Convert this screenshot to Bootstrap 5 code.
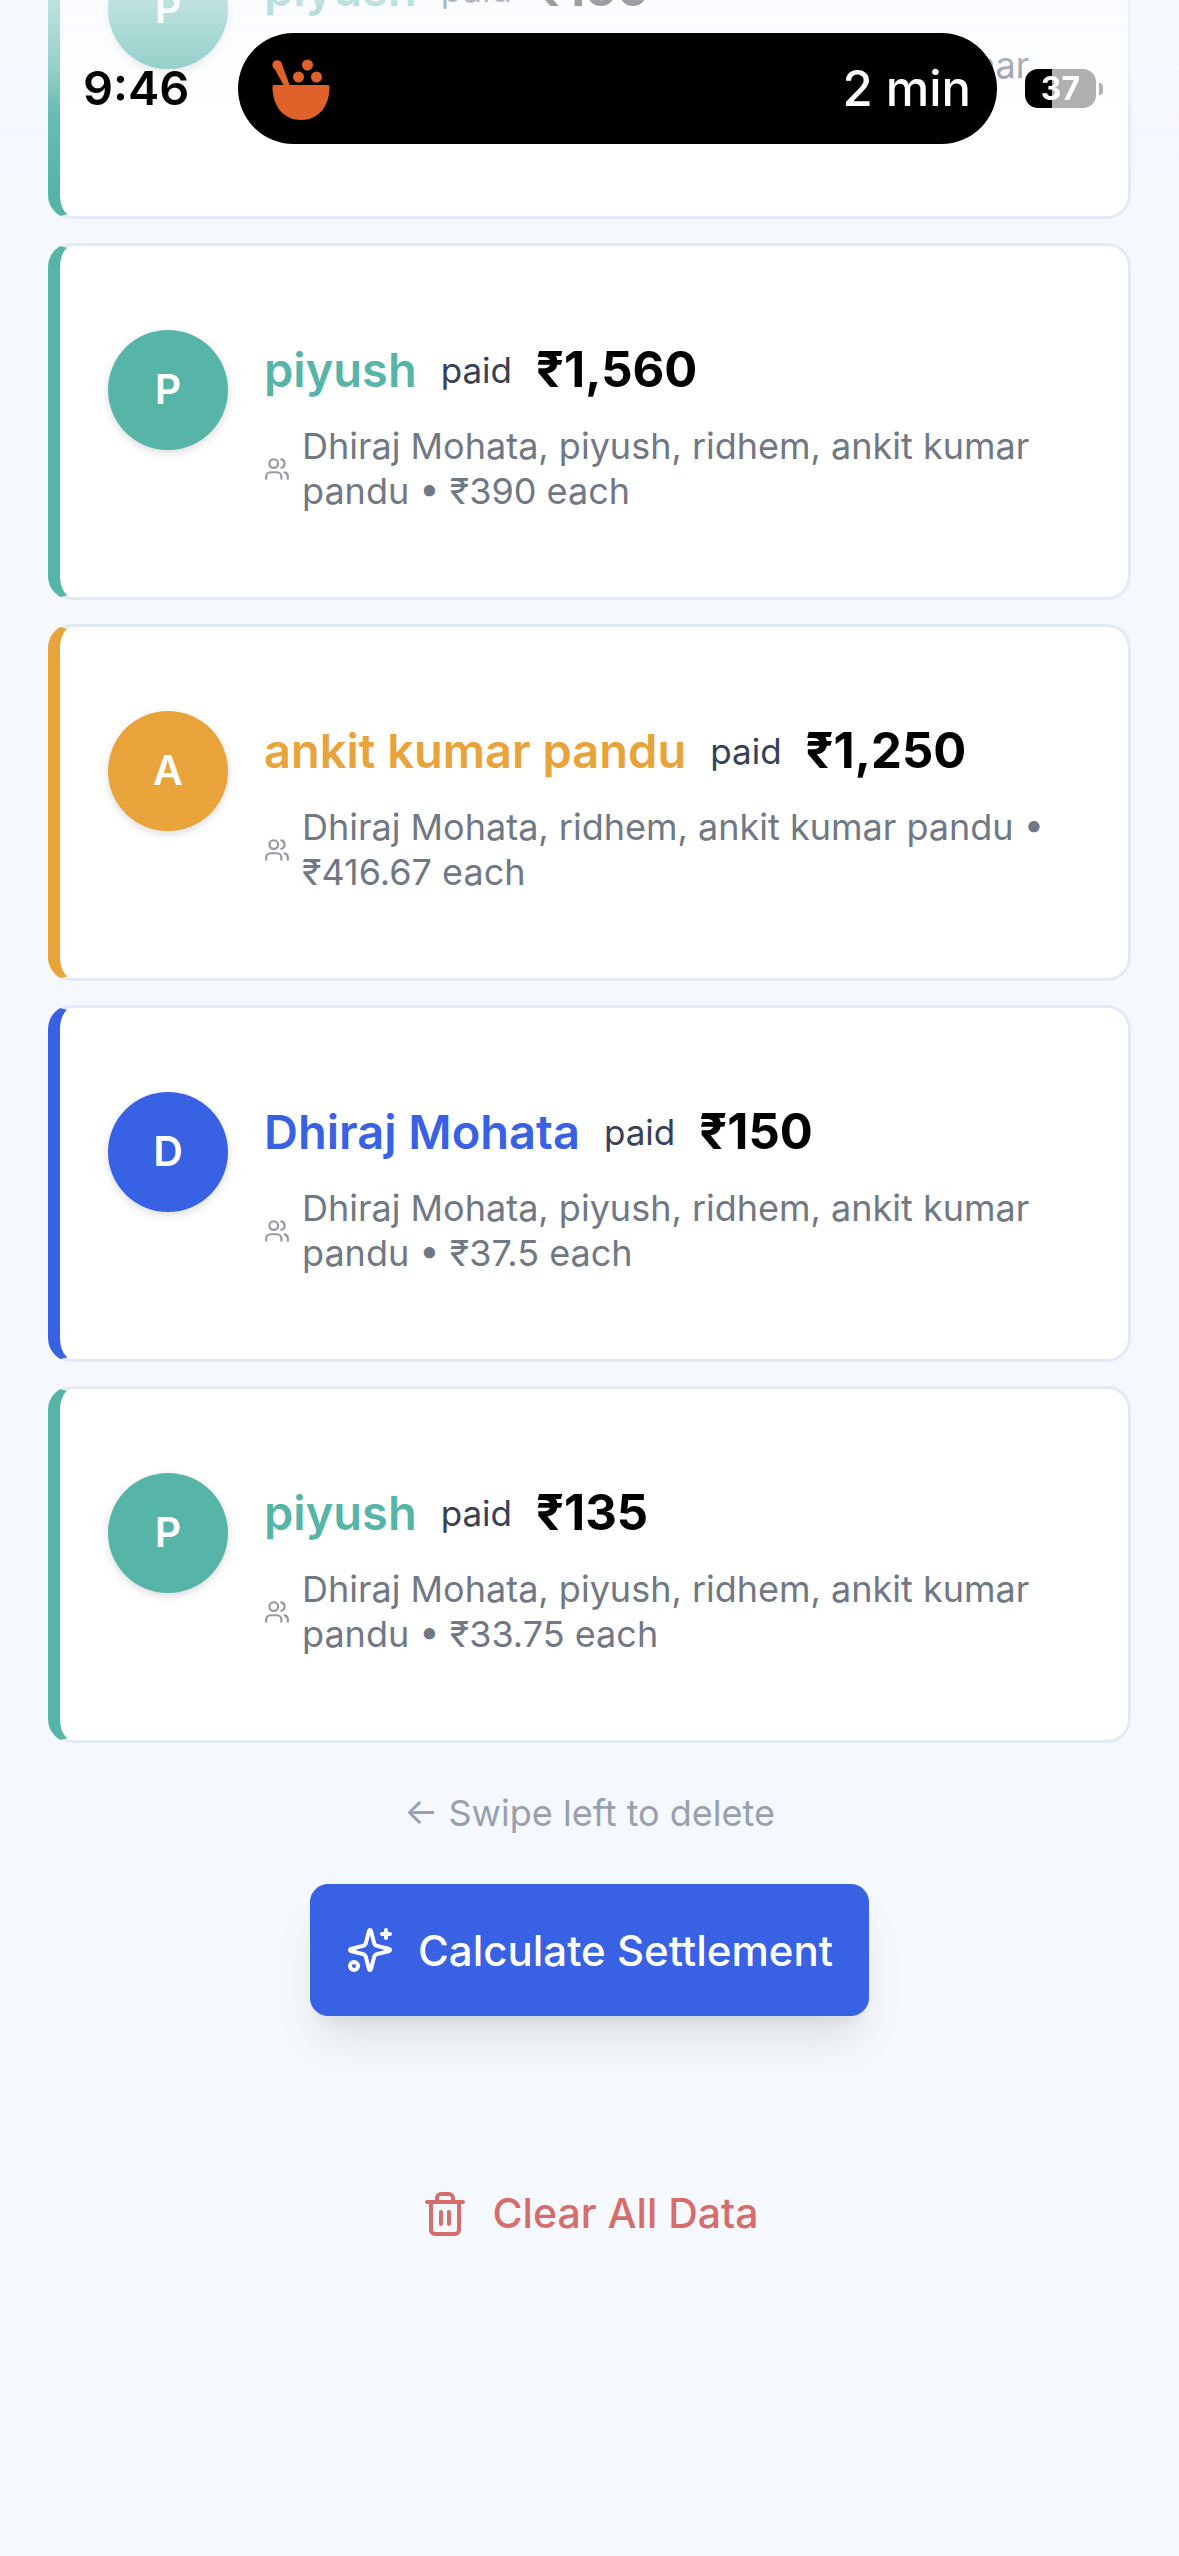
<!DOCTYPE html>
<html lang="en">
<head>
<meta charset="utf-8">
<meta name="viewport" content="width=device-width, initial-scale=1">
<title>Expenses</title>
<link href="https://cdn.jsdelivr.net/npm/bootstrap@5.3.0/dist/css/bootstrap.min.css" rel="stylesheet">
<style>
  body { background: #f5f8fd; font-family: Inter, "Noto Sans", sans-serif; color: #000; min-height: 100vh; }
  .c-teal { --who: #57b5a8; }
  .c-amber { --who: #e8a33b; }
  .c-blue { --who: #3861e3; }
  .page-pad { padding: 0 48px; }
  .expense-list { gap: 24px; }
  .expense { border: 3px solid #e3eaf6; border-left: 12px solid var(--who); border-radius: 24px; background: #fff; padding: 84px 48px 72px; gap: 36px; min-height: 357px; }
  .scrolled-off { height: 219px; }
  .avatar { width: 120px; height: 120px; background: var(--who); color: #fff; font-size: 41px; font-weight: 600; box-shadow: 0 3px 9px rgba(0,0,0,.14); }
  .summary { gap: 24px; line-height: 72px; padding-top: 4px; margin-bottom: 18px; }
  .payer { color: var(--who); font-size: 47px; font-weight: 600; }
  .verb { color: #364155; font-size: 35px; }
  .amount { font-size: 49px; font-weight: 700; }
  .split { gap: 12px; color: #717885; font-size: 36px; line-height: 45px; }
  .split svg { width: 26px; height: 26px; opacity: .75; }
  .line-icon { fill: none; stroke: currentColor; stroke-width: 2; stroke-linecap: round; stroke-linejoin: round; }
  .hint { color: #98a0af; font-size: 36px; line-height: 45px; margin: 48px 0; }
  .btn-settle { --bs-btn-color: #fff; --bs-btn-bg: #3861e3; --bs-btn-border-color: #3861e3; --bs-btn-hover-color: #fff; --bs-btn-hover-bg: #2d52c8; --bs-btn-border-radius: 18px; --bs-btn-font-size: 42px; --bs-btn-padding-x: 35px; height: 132px; gap: 24px; font-weight: 500; box-shadow: 0 30px 45px -9px rgba(0,0,0,.1), 0 12px 18px -12px rgba(0,0,0,.1); }
  .btn-settle svg, .btn-clear svg { width: 48px; height: 48px; }
  .btn-clear { --bs-btn-color: #d56d6d; --bs-btn-font-size: 41px; --bs-btn-hover-color: #c33; gap: 24px; margin-top: 132px; height: 132px; font-weight: 500; }
  .fade-top { height: 190px; background: linear-gradient(rgba(248,251,255,.64), rgba(248,251,255,.4) 35%, rgba(248,251,255,.12) 58%, rgba(248,251,255,0)); }
  .status { padding: 33px 76px 0 83px; height: 144px; font-weight: 600; }
  .clock { font-size: 47px; width: 155px; }
  .island { background: #000; color: #fff; border-radius: 56px; height: 111px; padding: 0 26px 0 30px; font-size: 49px; font-weight: 500; margin-right: 28px; }
  .island svg { width: 64px; height: 72px; }
  .battery { width: 71px; height: 39px; border-radius: 13px; background: linear-gradient(90deg, #000 38%, #b0b0b3 38%); color: #fff; font-size: 32px; font-weight: 700; line-height: 39px; }
  .nub { width: 4px; height: 12px; margin-left: 3px; border-radius: 0 4px 4px 0; background: #b0b0b3; }
</style>
</head>
<body>
<svg class="d-none">
  <symbol id="people" viewBox="0 0 24 24"><path d="M16 21v-2a4 4 0 0 0-4-4H6a4 4 0 0 0-4 4v2"/><circle cx="9" cy="7" r="4"/><path d="M22 21v-2a4 4 0 0 0-3-3.87M16 3.13a4 4 0 0 1 0 7.75"/></symbol>
</svg>

<header class="fixed-top fade-top">
  <div class="status d-flex align-items-center">
    <div class="clock">9:46</div>
    <div class="island flex-grow-1 d-flex align-items-center justify-content-between">
      <svg viewBox="0 0 64 72" fill="#e0622a" aria-hidden="true">
        <path d="M6 32h54q1.500 0 1.500 1.500C61.500 54 50 67 33 67S4.500 54 4.500 33.500Q4.500 32 6 32z"/>
        <path d="M4.800 12.500 16 33h6L13.500 10z"/><circle cx="9.200" cy="12" r="4.800"/>
        <circle cx="39.500" cy="12" r="5.500"/><circle cx="30.500" cy="24" r="5.500"/><circle cx="48.500" cy="24" r="5.500"/>
      </svg>
      <span>2 min</span>
    </div>
    <div class="battery text-center">37</div><div class="nub"></div>
  </div>
</header>

<main class="page-pad d-flex flex-column align-items-center">
  <div class="expense-list d-flex flex-column w-100">
    <div class="scrolled-off d-flex flex-column justify-content-end overflow-hidden">
      <article class="expense c-teal d-flex align-items-start flex-shrink-0">
        <div class="avatar rounded-circle d-flex align-items-center justify-content-center flex-shrink-0">P</div>
        <div class="flex-grow-1">
          <div class="summary d-flex align-items-center"><span class="payer">piyush</span><span class="verb">paid</span><span class="amount">₹150</span></div>
          <div class="split d-flex align-items-center"><svg class="line-icon flex-shrink-0"><use href="#people"/></svg><span>Dhiraj Mohata, piyush, ridhem, ankit kumar pandu • ₹37.5 each</span></div>
        </div>
      </article>
    </div>
    <article class="expense c-teal d-flex align-items-start">
      <div class="avatar rounded-circle d-flex align-items-center justify-content-center flex-shrink-0">P</div>
      <div class="flex-grow-1">
        <div class="summary d-flex align-items-center"><span class="payer">piyush</span><span class="verb">paid</span><span class="amount">₹1,560</span></div>
        <div class="split d-flex align-items-center"><svg class="line-icon flex-shrink-0"><use href="#people"/></svg><span>Dhiraj Mohata, piyush, ridhem, ankit kumar pandu • ₹390 each</span></div>
      </div>
    </article>
    <article class="expense c-amber d-flex align-items-start">
      <div class="avatar rounded-circle d-flex align-items-center justify-content-center flex-shrink-0">A</div>
      <div class="flex-grow-1">
        <div class="summary d-flex align-items-center"><span class="payer">ankit kumar pandu</span><span class="verb">paid</span><span class="amount">₹1,250</span></div>
        <div class="split d-flex align-items-center"><svg class="line-icon flex-shrink-0"><use href="#people"/></svg><span>Dhiraj Mohata, ridhem, ankit kumar pandu • ₹416.67 each</span></div>
      </div>
    </article>
    <article class="expense c-blue d-flex align-items-start">
      <div class="avatar rounded-circle d-flex align-items-center justify-content-center flex-shrink-0">D</div>
      <div class="flex-grow-1">
        <div class="summary d-flex align-items-center"><span class="payer">Dhiraj Mohata</span><span class="verb">paid</span><span class="amount">₹150</span></div>
        <div class="split d-flex align-items-center"><svg class="line-icon flex-shrink-0"><use href="#people"/></svg><span>Dhiraj Mohata, piyush, ridhem, ankit kumar pandu • ₹37.5 each</span></div>
      </div>
    </article>
    <article class="expense c-teal d-flex align-items-start">
      <div class="avatar rounded-circle d-flex align-items-center justify-content-center flex-shrink-0">P</div>
      <div class="flex-grow-1">
        <div class="summary d-flex align-items-center"><span class="payer">piyush</span><span class="verb">paid</span><span class="amount">₹135</span></div>
        <div class="split d-flex align-items-center"><svg class="line-icon flex-shrink-0"><use href="#people"/></svg><span>Dhiraj Mohata, piyush, ridhem, ankit kumar pandu • ₹33.75 each</span></div>
      </div>
    </article>
  </div>
  <p class="hint">← Swipe left to delete</p>
  <button type="button" class="btn btn-settle d-flex align-items-center">
    <svg class="line-icon" viewBox="0 0 24 24" aria-hidden="true"><path d="M9.937 15.500A2 2 0 0 0 8.500 14.063l-6.135-1.582a.5.5 0 0 1 0-.962L8.500 9.936A2 2 0 0 0 9.937 8.500l1.582-6.135a.5.5 0 0 1 .963 0L14.063 8.500A2 2 0 0 0 15.500 9.937l6.135 1.581a.5.5 0 0 1 0 .964L15.500 14.063a2 2 0 0 0-1.437 1.437l-1.582 6.135a.5.5 0 0 1-.963 0z"/><path d="M20 2v4M22 4h-4"/><circle cx="4" cy="20" r="2"/></svg>
    Calculate Settlement
  </button>
  <button type="button" class="btn btn-clear d-flex align-items-center">
    <svg class="line-icon" viewBox="0 0 24 24" aria-hidden="true"><path d="M3 6h18M19 6v14a2 2 0 0 1-2 2H7a2 2 0 0 1-2-2V6M8 6V4a2 2 0 0 1 2-2h4a2 2 0 0 1 2 2v2M10 11v6M14 11v6"/></svg>
    Clear All Data
  </button>
</main>
<script src="https://cdn.jsdelivr.net/npm/bootstrap@5.3.0/dist/js/bootstrap.bundle.min.js"></script>
</body>
</html>
